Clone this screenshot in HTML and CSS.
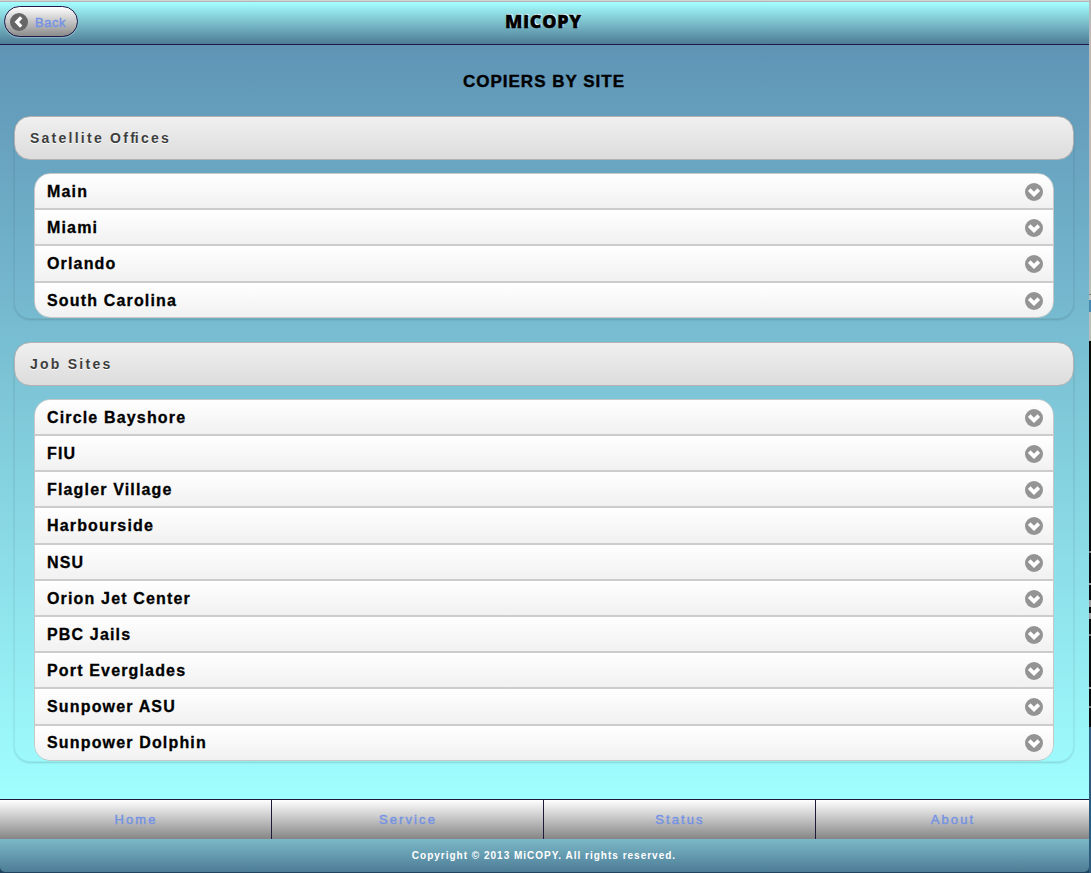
FILE: index.html
```html
<!DOCTYPE html>
<html lang="en">
<head>
<meta charset="utf-8">
<title>MiCOPY</title>
<link rel="stylesheet" href="styles.css">
</head>
<body>
<svg class="defs" aria-hidden="true">
  <symbol id="down" viewBox="0 0 18 18"><circle cx="9" cy="9" r="9" fill="#949494"/><path d="M4.2 6.6 9 11.3 13.8 6.6" fill="none" stroke="#fff" stroke-width="3.7"/></symbol>
  <symbol id="left" viewBox="0 0 18 18"><circle cx="9" cy="9" r="9" fill="#666"/><path d="M11.2 4.4 6.8 9l4.4 4.6" fill="none" stroke="#fff" stroke-width="3.3"/></symbol>
</svg>
<div class="desktop">
<div class="page">
  <header class="header">
    <a class="back"><svg class="icon"><use href="#left"/></svg><span>Back</span></a>
    <h1 class="brand">MiCOPY</h1>
  </header>
  <main class="content">
    <h2 class="title">COPIERS BY SITE</h2>
    <section class="panel">
      <h3 class="heading">Satellite Of<span class="tight">f</span>ices</h3>
      <ul class="list">
        <li class="row"><span>Main</span><svg class="icon"><use href="#down"/></svg></li>
        <li class="row"><span>Miami</span><svg class="icon"><use href="#down"/></svg></li>
        <li class="row"><span>Orlando</span><svg class="icon"><use href="#down"/></svg></li>
        <li class="row"><span>South Carolina</span><svg class="icon"><use href="#down"/></svg></li>
      </ul>
    </section>
    <section class="panel">
      <h3 class="heading">Job Sites</h3>
      <ul class="list">
        <li class="row"><span>Circle Bayshore</span><svg class="icon"><use href="#down"/></svg></li>
        <li class="row"><span>FIU</span><svg class="icon"><use href="#down"/></svg></li>
        <li class="row"><span>Flagler Village</span><svg class="icon"><use href="#down"/></svg></li>
        <li class="row"><span>Harbourside</span><svg class="icon"><use href="#down"/></svg></li>
        <li class="row"><span>NSU</span><svg class="icon"><use href="#down"/></svg></li>
        <li class="row"><span>Orion Jet Center</span><svg class="icon"><use href="#down"/></svg></li>
        <li class="row"><span>PBC Jails</span><svg class="icon"><use href="#down"/></svg></li>
        <li class="row"><span>Port Everglades</span><svg class="icon"><use href="#down"/></svg></li>
        <li class="row"><span>Sunpower ASU</span><svg class="icon"><use href="#down"/></svg></li>
        <li class="row"><span>Sunpower Dolphin</span><svg class="icon"><use href="#down"/></svg></li>
      </ul>
    </section>
  </main>
  <nav class="nav"><a>Home</a><a>Service</a><a>Status</a><a>About</a></nav>
  <footer class="footer">Copyright © 2013 MiCOPY. All rights reserved.</footer>
</div>
<div class="edge"></div>
</div>
</body>
</html>
```
FILE: styles.css
```css
* { box-sizing: border-box; }
body {
  margin: 0;
  font-family: "Liberation Sans", Arial, sans-serif;
  font-weight: bold;
  overflow: hidden;
}
h1, h2, h3, ul { margin: 0; padding: 0; list-style: none; }
.defs { display: none; }
.desktop {
  display: flex;
  width: 1091px;
  height: 873px;
  background: #21435f;
}
.page {
  display: flex;
  flex-direction: column;
  width: 1089px;
  height: 872px;
  border-top: 1px solid #d2d2d2;
  border-radius: 0 0 5px 5px;
  overflow: hidden;
}
.edge {
  width: 2px;
  background: linear-gradient(#b9b9b9 0 294px, #777 294px 295px, #c0c0c0 295px 300px, #4788af 300px 312px, #bbb 312px 341px, #080c0d 341px 551px, #777 551px 553px, #080c0d 553px 583px, #999 583px 585px, #080c0d 585px 600px, #999 600px 607px, #080c0d 607px 613px, #999 613px 619px, #080c0d 619px 634px, #777 634px 636px, #080c0d 636px 687px, #999 687px 689px, #080c0d 689px 706px, #777 706px 708px, #080c0d 708px 727px, #2d5b7e 727px);
}
.header {
  display: grid;
  grid-template-columns: 1fr auto 1fr;
  align-items: center;
  height: 44px;
  padding: 0 4px 4px;
  border-top: 1px solid #b5b5b5;
  border-bottom: 1px solid #21194a;
  background: linear-gradient(#a5ffff, #4e7c96);
}
.icon { width: 18px; height: 18px; flex: none; }
.back {
  display: flex;
  align-items: center;
  gap: 7px;
  width: 74px;
  height: 31px;
  padding: 1px 5px 0;
  border: 1px solid #21194a;
  border-radius: 16px;
  background: linear-gradient(#fff, #8b8b8b);
  box-shadow: 0 1px 1px rgba(255,255,255,.3);
  color: #7492e4;
  font-size: 13px;
  font-weight: normal;
  letter-spacing: .5px;
  -webkit-text-stroke: .4px #7492e4;
}
.back span { padding-top: 1px; }
.brand {
  margin-right: 2px;
  font: 800 18px/24px "Open Sans", sans-serif;
  letter-spacing: .7px;
  color: #000;
  -webkit-text-stroke: .4px #000;
  text-shadow: 1px -1px 1px #fff;
}
.content {
  flex: 1;
  padding: 25px 15px 0 14px;
  background: linear-gradient(#5f94b5, #a0ffff);
}
.title {
  height: 46px;
  line-height: 24px;
  font-size: 17px;
  letter-spacing: 1px;
  text-align: center;
  -webkit-text-stroke: .4px #000;
}
.panel {
  margin-bottom: 23px;
  padding-bottom: 1px;
  border-radius: 16px;
  box-shadow: inset 0 0 0 1px rgba(0,0,0,.06), 0 1px 2px rgba(0,0,0,.15);
}
.heading {
  height: 44px;
  padding-left: 15px;
  border: 1px solid #b3b3b3;
  border-radius: 16px;
  background: linear-gradient(#f0f0f0, #dcdcdc);
  color: #3d3d3d;
  font-size: 14px;
  line-height: 43px;
  letter-spacing: 2.25px;
  text-shadow: 0 1px 0 #fff;
}
.tight { letter-spacing: 0; }
.list {
  margin: 13px 20px 0;
  border: 1px solid #c7c7c7;
  border-radius: 16px;
  overflow: hidden;
}
.row {
  display: flex;
  align-items: center;
  justify-content: space-between;
  height: 36.2px;
  padding: 1.6px 10px 0 12px;
  border-bottom: 2px solid #ccc;
  background: linear-gradient(#fff, #f1f1f1);
  font-size: 16px;
  letter-spacing: 1.16px;
  -webkit-text-stroke: .3px #000;
}
.row:last-child { height: 34.3px; border-bottom: 0; }
.nav {
  display: grid;
  grid-template-columns: 272px 272px 272px 1fr;
  height: 40px;
  border-top: 1px solid #21193b;
  background: linear-gradient(#fff, #858585);
}
.nav a {
  padding-left: 1px;
  border-right: 1px solid #21193b;
  color: #7492e4;
  font-size: 13px;
  font-weight: normal;
  line-height: 39px;
  letter-spacing: 2.1px;
  text-align: center;
  -webkit-text-stroke: .4px #7492e4;
}
.nav a:last-child { border-right: 0; }
.footer {
  height: 33px;
  padding-right: 1px;
  background: linear-gradient(#7bb9c8, #4d7c96);
  color: #fff;
  font-size: 10px;
  line-height: 33px;
  letter-spacing: 1px;
  text-align: center;
}
```
